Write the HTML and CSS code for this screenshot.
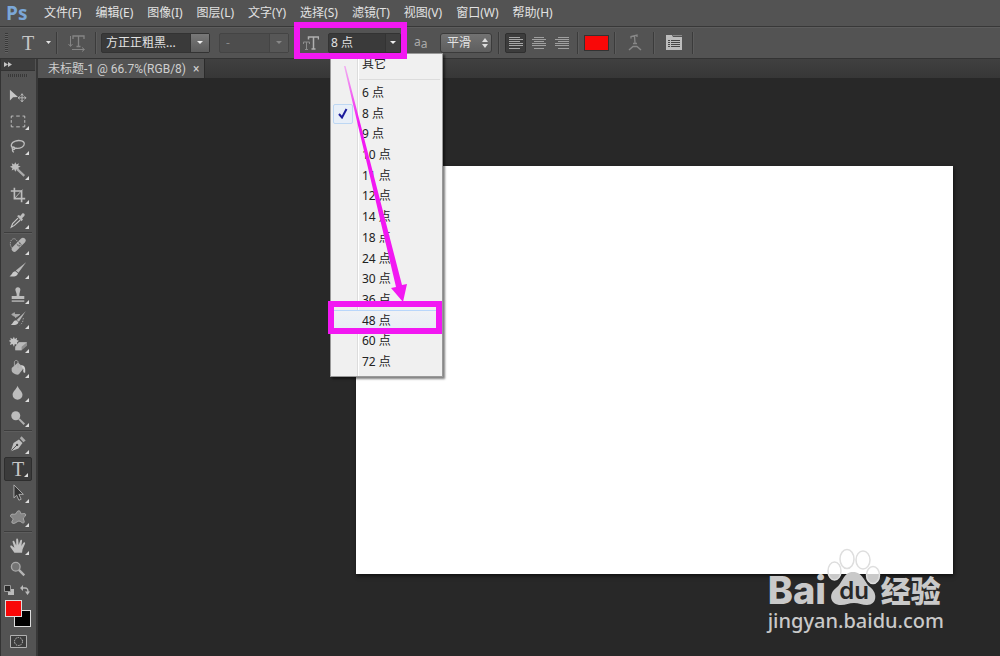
FILE: index.html
```html
<!DOCTYPE html>
<html lang="zh-CN">
<head>
  <meta charset="UTF-8">
  <meta name="viewport" content="width=device-width, initial-scale=1.0">
  <title>未标题-1</title>
  <link rel="stylesheet" href="styles.css">
</head>
<body>
  <div class="app">
    <!-- Menu bar -->
    <header class="menubar">
      <span class="logo">Ps</span>
      <nav class="menus">
        <button>文件(F)</button>
        <button>编辑(E)</button>
        <button>图像(I)</button>
        <button>图层(L)</button>
        <button>文字(Y)</button>
        <button>选择(S)</button>
        <button>滤镜(T)</button>
        <button>视图(V)</button>
        <button>窗口(W)</button>
        <button>帮助(H)</button>
      </nav>
    </header>

    <!-- Type tool options -->
    <div class="options">
      <span class="options-grip"></span>
      <button class="preset" aria-label="工具预设">
        <span class="type-letter">T</span>
        <svg width="5" height="3" viewBox="0 0 5 3"><path d="M0 0h5L2.500 3z" fill="#e4e4e4"/></svg>
      </button>
      <span class="divider"></span>
      <button class="icon-button orientation" aria-label="切换文本取向">
        <svg width="18" height="18" viewBox="0 0 18 18" fill="none" stroke="#858585">
          <path d="M5 5V2h11v3M10.500 2v10M8.500 12.500h4" stroke-width="1.300"/>
          <path d="M2.500 2v10M.5 10l2 2.500 2-2.500M4 15.500h12M14 13.500l2.500 2-2.500 2"/>
        </svg>
      </button>
      <span class="divider"></span>
      <label class="combo combo-font">
        <select aria-label="字体"><option>方正正粗黑...</option></select>
        <span class="combo-arrow"></span>
      </label>
      <label class="combo combo-style disabled">
        <select aria-label="字体样式" disabled><option>-</option></select>
        <span class="combo-arrow"></span>
      </label>
      <div class="size-control">
        <label class="size-label" for="font-size" aria-label="字体大小">
          <svg width="16" height="14" viewBox="0 0 16 14" fill="none" stroke="#b0b0b0">
            <path d="M5.500 3.500V1h10v2.500M10.500 1v11.500M8.500 13h4" stroke-width="1.500"/>
            <path d="M.5 8V6h6v2M3.500 6v7M2 13.500h3" stroke="#8d8d8d"/>
          </svg>
        </label>
        <div class="combo combo-size">
          <input id="font-size" type="text" value="8 点">
          <button class="combo-arrow" aria-label="选择大小"></button>
        </div>
        <div class="size-menu">
          <button class="size-item">其它</button>
          <div class="size-list">
            <button class="size-item">6 点</button>
            <button class="size-item checked">
              <span class="check"><svg width="10" height="11" viewBox="0 0 10 11" fill="none" stroke="#1c1c9c" stroke-width="2"><path d="M1 6l3 3.500L8.500 1"/></svg></span>8 点</button>
            <button class="size-item">9 点</button>
            <button class="size-item">10 点</button>
            <button class="size-item">11 点</button>
            <button class="size-item">12 点</button>
            <button class="size-item">14 点</button>
            <button class="size-item">18 点</button>
            <button class="size-item">24 点</button>
            <button class="size-item">30 点</button>
            <button class="size-item">36 点</button>
            <button class="size-item hover">48 点</button>
            <button class="size-item">60 点</button>
            <button class="size-item">72 点</button>
          </div>
        </div>
      </div>
      <label class="aa" for="anti-alias"><span>a</span><span class="aa-low">a</span></label>
      <div class="smooth">
        <select id="anti-alias"><option>平滑</option></select>
        <svg width="6" height="10" viewBox="0 0 6 10" fill="#dedede"><path d="M0 4l3-4 3 4zM0 6l3 4 3-4z"/></svg>
      </div>
      <span class="divider"></span>
      <div class="aligns">
        <button class="icon-button align active" aria-label="左对齐">
          <svg width="14" height="12" viewBox="0 0 14 12" stroke="#a6a6a6"><path d="M0 .5h11M0 2.500h14M0 4.500h11M0 6.500h14M0 8.500h14M0 11.500h11"/></svg>
        </button>
        <button class="icon-button align" aria-label="居中对齐">
          <svg width="14" height="12" viewBox="0 0 14 12" stroke="#a0a0a0"><path d="M2 .5h10M0 2.500h14M2 4.500h10M0 6.500h14M0 8.500h14M2 11.500h10"/></svg>
        </button>
        <button class="icon-button align" aria-label="右对齐">
          <svg width="14" height="12" viewBox="0 0 14 12" stroke="#a0a0a0"><path d="M3 .5h11M0 2.500h14M3 4.500h11M0 6.500h14M0 8.500h14M3 11.500h11"/></svg>
        </button>
      </div>
      <span class="divider"></span>
      <button class="color-swatch" aria-label="文本颜色"></button>
      <span class="divider"></span>
      <button class="icon-button warp" aria-label="变形文字">
        <svg width="14" height="17" viewBox="0 0 14 17" fill="none" stroke="#888">
          <path d="M3 4.500V2.500l6-1.500v2M6.500 2l.5 7M5 9.500h4" stroke-width="1.300"/>
          <path d="M1 16l4-3.500h4l4 3.500" stroke-width="1.500"/>
        </svg>
      </button>
      <span class="divider"></span>
      <button class="icon-button panel" aria-label="字符和段落面板">
        <svg width="16" height="15" viewBox="0 0 16 15">
          <path d="M0 0h6l1 2h9v13H0z" fill="#bdbdbd"/>
          <path d="M7 .5h9" stroke="#888"/>
          <path d="M2 5.500h2M5 5.500h9M2 7.500h2M5 7.500h9M2 9.500h2M5 9.500h9M2 11.500h2M5 11.500h9" stroke="#454545"/>
        </svg>
      </button>
      <span class="divider"></span>
    </div>

    <div class="workspace">
      <!-- Toolbox -->
      <aside class="toolbox">
        <button class="collapse" aria-label="展开面板">
          <svg width="8" height="5" viewBox="0 0 8 5" fill="#c4c4c4"><path d="M0 0l4 2.500L0 5zM4 0l4 2.500L4 5z"/></svg>
        </button>
        <div class="toolbox-grip"></div>

        <div class="tools tools-select">
          <button class="tool" aria-label="移动">
            <svg viewBox="0 0 20 20"><path d="M1 3v12l3.500-3.500L10 11z" fill="#c6c6c6"/><path d="M14.500 7.500v9M10 12h9M13 9.500l1.500-2L16 9.500M13 14.500l1.500 2 1.500-2M12 10.500L10 12l2 1.500M17 10.500l2 1.500-2 1.500" fill="none" stroke="#bbb"/></svg>
          </button>
          <button class="tool more" aria-label="矩形选框">
            <svg viewBox="0 0 20 20"><path d="M2.500 7V4.500H5M8 4.500h4M15 4.500h2.500V7M17.500 9v3M17.500 14v2.500H15M12 16.500H8M5 16.500H2.500V14M2.500 12V9" fill="none" stroke="#c8c8c8"/></svg>
          </button>
          <button class="tool more" aria-label="套索">
            <svg viewBox="0 0 20 20" fill="none" stroke="#bdbdbd" stroke-width="1.400"><path d="M5 12C1 11 2 6 7 4.500c5-1.500 10 0 10 3S13 13 8 12.500c-1-.1-2-.4-3-.5zM5 11c-2 0-2 3 0 3 2 0 2-2.500 0-3M4.500 14c-1 0-1 2 1 3"/></svg>
          </button>
          <button class="tool more" aria-label="魔棒">
            <svg viewBox="0 0 20 20"><path d="M7 1.500L8.300 4l2.700-1.500-.8 2.700 2.800 1-2.800 1.300L11.500 10l-3-.8L7 12l-1.300-2.800L3 10.500l.8-2.700L1 6.500l2.800-1.300L3 2.500 5.700 4z" fill="#bdbdbd"/><path d="M9 9l8 7.500" stroke="#ababab" stroke-width="2.400"/></svg>
          </button>
          <button class="tool more" aria-label="裁剪">
            <svg viewBox="0 0 20 20" fill="none" stroke="#bdbdbd" stroke-width="1.800"><path d="M6 2v12h12M2 5.500h12V18"/><path d="M6.500 13.500L15 4" stroke-width="1"/></svg>
          </button>
          <button class="tool more" aria-label="吸管">
            <svg viewBox="0 0 20 20"><path d="M10 8L4 14l-1.500 4L6 16l6.500-6" fill="none" stroke="#c8c8c8" stroke-width="1.300"/><path d="M9 5.500l2-1 1.500 1 2-2.500c1.500-1.500 4 .5 2.500 2.500L14.500 8l1 1.500-1.500 1.800z" fill="#bdbdbd"/></svg>
          </button>
        </div>

        <div class="tools tools-paint">
          <button class="tool more" aria-label="污点修复画笔">
            <svg viewBox="0 0 20 20"><ellipse cx="5.500" cy="8.500" rx="4" ry="5.500" fill="none" stroke="#b5b5b5" stroke-dasharray="1.500 1"/><path d="M6 14.500L15.500 5" stroke="#b5b5b5" stroke-width="6" stroke-linecap="round"/><path d="M8.500 9l4 4M10.500 6.500l4 4" stroke="#6c6c6c"/><path d="M10 10h.1M12 8h.1M12 10.500h.1" stroke="#555" stroke-width="1.300" stroke-linecap="round"/></svg>
          </button>
          <button class="tool more" aria-label="画笔">
            <svg viewBox="0 0 20 20"><path d="M19 1.500L7.500 10.500l3 2.500z" fill="#b8b8b8"/><path d="M10 13.500c-1 4.500-6.500 4-9.500 3.500 3-1 3-5.500 6.500-5.500z" fill="#c9c9c9"/></svg>
          </button>
          <button class="tool more" aria-label="仿制图章">
            <svg viewBox="0 0 20 20" fill="#bcbcbc"><path d="M8.500 9l-1.300-4a2.800 2.800 0 1 1 5.300 0L11.500 9v2H17v3.500H3V11h5.500z"/><path d="M3 16h14v1.500H3z"/></svg>
          </button>
          <button class="tool more" aria-label="历史记录画笔">
            <svg viewBox="0 0 20 20"><path d="M18.500 1.500l-10 9.500 2.500 2z" fill="#b8b8b8"/><path d="M10.500 13.500c-1 3.500-5 3.500-8.500 3 2.500-.8 2.500-5 6-5z" fill="#c9c9c9"/><path d="M3 5l3-2v4zM5 5h7L7 8.500" fill="#aaa" stroke="#aaa"/><path d="M16 9l-1 5-3 3" fill="none" stroke="#aaa" stroke-dasharray="1.500 1.500"/></svg>
          </button>
          <button class="tool more" aria-label="魔术橡皮擦">
            <svg viewBox="0 0 20 20"><path d="M5.500 2l1 2.500L9 3l-.5 2.500L11 6.500 9 8l.5 3-3-1-1 3-1.500-3-3 1L2 8-.5 6.500 2 5.500 1.500 3 4 4.500z" fill="#c4c4c4"/><path d="M11 8h9v4l-6 5H7v-4z" fill="#8d8d8d"/><path d="M11 8h9l-6 5H7zM7 13h7v4H7z" fill="#bababa"/></svg>
          </button>
          <button class="tool more" aria-label="油漆桶">
            <svg viewBox="0 0 20 20"><path d="M3 10l7-6 6.500 6-5.500 7c-3 1.500-8-2-8-4z" fill="#b5b5b5"/><path d="M10 10V3.500c0-2.500-4-2.500-4 0V8" fill="none" stroke="#a8a8a8"/><path d="M13 7c4 0 5.500 2 5 8-2 1-2.500-1-2-4z" fill="#d1d1d1"/></svg>
          </button>
          <button class="tool more" aria-label="模糊">
            <svg viewBox="0 0 20 20"><path d="M9.500 2c1 3.500 5.500 6.500 5.500 10a5.500 5.500 0 0 1-11 0C4 8.500 8.500 5.500 9.500 2z" fill="#bdbdbd"/></svg>
          </button>
          <button class="tool more" aria-label="减淡">
            <svg viewBox="0 0 20 20"><circle cx="7.500" cy="7.500" r="5" fill="#bdbdbd"/><path d="M11 11l6 6" stroke="#b0b0b0" stroke-width="2.200"/></svg>
          </button>
        </div>

        <div class="tools tools-vector">
          <button class="tool more" aria-label="钢笔">
            <svg viewBox="0 0 20 20"><path d="M2 18L5 9l6-4 4 4-4.500 6z" fill="#c0c0c0"/><path d="M12 3.500l2-2 4.500 4.500-2.500 2z" fill="#aaa"/><path d="M2.500 17.500l6-6" stroke="#484848"/><circle cx="9" cy="11" r="1.300" fill="#484848"/></svg>
          </button>
          <button class="tool more active" aria-label="横排文字"><span class="type-letter">T</span></button>
          <button class="tool more" aria-label="直接选择">
            <svg viewBox="0 0 20 20"><path d="M5.500 1v14.500l3-3 2.500 5.500 2.500-1-2.500-5.500h5z" fill="#333" stroke="#b4b4b4"/></svg>
          </button>
          <button class="tool more" aria-label="自定形状">
            <svg viewBox="0 0 20 20"><path d="M8 5c1-4 5-4 5 0 1 1 5.500-1.500 5.500 1.500 0 2.500-3 2.500-2.500 4.500.5 2 2 4 0 4.500-2 .5-3-2.500-5-2-2 0-5 4-7.500 2-1.500-1.500 1.500-3 1-4.500C4 9.500.5 9 2 6.500 3.500 4.500 6 7 8 5z" fill="#858585" stroke="#b0b0b0"/></svg>
          </button>
        </div>

        <div class="tools tools-view">
          <button class="tool more" aria-label="抓手">
            <svg viewBox="0 0 20 20"><path d="M6 17.500L1.500 11c-.5-1.500 1-2 2-1L6 12 4 5.500C3.700 4 5.500 3.500 6 5l2 4.500V3c0-1.700 2-1.700 2.200 0l.5 6L12.500 4c.5-1.500 2.200-1 2 .5L13.700 10l2.300-3.500c.8-1.300 2.400-.5 1.800 1L15 14l-.5 3.500z" fill="#c0c0c0"/></svg>
          </button>
          <button class="tool" aria-label="缩放">
            <svg viewBox="0 0 20 20"><circle cx="7.500" cy="7.500" r="4.800" fill="#747474" stroke="#a9a9a9" stroke-width="1.500"/><path d="M11 11l6 6" stroke="#b4b4b4" stroke-width="2.600"/></svg>
          </button>
        </div>

        <div class="color-actions">
          <button aria-label="默认颜色">
            <svg width="10" height="10" viewBox="0 0 10 10"><path d="M4 4h6v6H4z" fill="#bbb"/><path d="M.5 .5h6v6h-6z" fill="#2a2a2a" stroke="#999"/></svg>
          </button>
          <button aria-label="切换颜色">
            <svg width="10" height="10" viewBox="0 0 10 10"><path d="M2 3h3c2 0 3 1 3 4" fill="none" stroke="#bbb" stroke-width="1.300"/><path d="M0 3l3-3v6zM5 6.500h5L7.500 10z" fill="#bbb"/></svg>
          </button>
        </div>
        <div class="colors">
          <button class="background-color" aria-label="背景色"></button>
          <button class="foreground-color" aria-label="前景色"></button>
        </div>
        <button class="quick-mask" aria-label="快速蒙版">
          <svg width="17" height="13" viewBox="0 0 17 13" fill="none"><path d="M.5 .5h16v12H.5z" fill="#3d3d3d" stroke="#b0b0b0"/><circle cx="8.500" cy="6.500" r="4" stroke="#c4c4c4" stroke-dasharray="1.500 1"/></svg>
        </button>
      </aside>

      <!-- Document -->
      <main class="document">
        <div class="tabs">
          <div class="tab">
            <span>未标题-1 @ 66.7%(RGB/8)</span>
            <button class="tab-close" aria-label="关闭">×</button>
          </div>
        </div>
        <div class="stage">
          <div class="canvas"></div>
        </div>
      </main>

      <div class="watermark">
        <div class="watermark-brand">
          <span class="brand-latin">Bai</span>
          <svg class="paw" width="54" height="58" viewBox="0 0 54 58">
            <defs>
              <linearGradient id="toe" gradientUnits="userSpaceOnUse" x1="0" y1="0" x2="0" y2="58">
                <stop offset="0.450" stop-color="#fff"/>
                <stop offset="0.450" stop-color="#c9c9c9"/>
              </linearGradient>
            </defs>
            <g fill="url(#toe)" stroke="#dedede" stroke-width="1.500">
              <ellipse cx="20" cy="11" rx="7" ry="9.500"/>
              <ellipse cx="36" cy="12" rx="7" ry="9"/>
              <ellipse cx="7.500" cy="23" rx="6.500" ry="9"/>
              <ellipse cx="46" cy="27" rx="6.500" ry="8.500"/>
            </g>
            <path d="M26 24c10 0 11 10 17 15 8 6 7 18-3 18-5 0-8-2-13-2s-8 2-13 2C3 57 1 46 9 40c7-5 7-16 17-16z" fill="#c9c9c9"/>
            <text x="27" y="51" text-anchor="middle" class="paw-text">du</text>
          </svg>
          <span class="brand-cjk">经验</span>
        </div>
        <div class="watermark-url">jingyan.baidu.com</div>
      </div>
    </div>

    <!-- Highlight boxes and arrow -->
    <svg class="annotation" width="450" height="340" viewBox="0 0 450 340">
      <defs>
        <linearGradient id="fade" x1="0" y1="0" x2="0" y2="1">
          <stop offset="0" stop-color="#f218f2" stop-opacity="0.300"/>
          <stop offset="0.250" stop-color="#f218f2"/>
        </linearGradient>
      </defs>
      <rect x="297" y="25" width="107" height="31" fill="none" stroke="#f218f2" stroke-width="6"/>
      <rect x="331" y="304" width="108" height="27" fill="none" stroke="#f218f2" stroke-width="6"/>
      <path d="M344 66l1.500 0L402 285l5-1-4 18-12-14 5-1z" fill="url(#fade)"/>
    </svg>
  </div>
</body>
</html>
```
FILE: styles.css
```css
* {
  box-sizing: border-box;
}

body {
  margin: 0;
  background: #282828;
  color: #e2e2e2;
  font-family: "Noto Sans", "Noto Sans CJK SC", sans-serif;
  font-size: 12px;
  line-height: 16px;
}

button,
select,
input {
  margin: 0;
  padding: 0;
  border: 0;
  background: none;
  color: inherit;
  font: inherit;
}

select {
  appearance: none;
}

svg {
  display: block;
}

.app {
  position: relative;
  display: flex;
  flex-direction: column;
  min-height: 100vh;
}

/* Menu bar */
.menubar {
  display: flex;
  align-items: center;
  height: 26px;
  padding-left: 6px;
  background: #535353;
}

.logo {
  width: 38px;
  color: #7ba7d7;
  font-family: "Open Sans", sans-serif;
  font-size: 19px;
  font-weight: bold;
}

.menus {
  display: flex;
  gap: 14px;
}

.menus button {
  white-space: nowrap;
}

/* Options bar */
.options {
  display: flex;
  align-items: center;
  height: 33px;
  padding-left: 5px;
  border-top: 1px solid #383838;
  border-bottom: 1px solid #333;
  background: #535353;
  box-shadow: inset 0 1px #5d5d5d;
}

.options-grip {
  width: 3px;
  height: 20px;
  background: repeating-linear-gradient(#383838 0 1px, #626262 1px 2px);
}

.divider {
  flex: none;
  width: 2px;
  height: 22px;
  border-left: 1px solid #3b3b3b;
  border-right: 1px solid #5c5c5c;
}

.preset {
  display: flex;
  align-items: center;
  justify-content: space-between;
  width: 48px;
  padding: 0 5px 0 14px;
}

.type-letter {
  color: #c6c6c6;
  font-family: "Liberation Serif", serif;
  font-size: 20px;
  line-height: 20px;
}

.icon-button {
  display: flex;
  align-items: center;
  justify-content: center;
  height: 20px;
}

.orientation {
  width: 37px;
}

.combo {
  display: flex;
  height: 20px;
  border: 1px solid #333;
  border-radius: 2px;
  background: #3a3a3a;
}

.combo select,
.combo input {
  flex: 1;
  min-width: 0;
  padding-left: 4px;
}

.combo-arrow {
  display: flex;
  align-items: center;
  justify-content: center;
  width: 19px;
  border-left: 1px solid #333;
  background: linear-gradient(#787878, #5c5c5c);
}

.combo-arrow::after {
  content: "";
  border: 3px solid transparent;
  border-top-color: #eee;
  border-bottom: 0;
}

.combo-font {
  width: 109px;
  margin-left: 4px;
}

.combo-style {
  width: 70px;
  margin-left: 9px;
}

.combo.disabled {
  border-color: #444;
  background: #4d4d4d;
  color: #888;
}

.disabled select {
  opacity: 1;
  padding-left: 6px;
}

.disabled .combo-arrow {
  border-color: #444;
  background: #575757;
}

.disabled .combo-arrow::after {
  border-top-color: #888;
}

.size-control {
  position: relative;
  display: flex;
  align-items: center;
  margin-left: 14px;
}

.size-label {
  width: 25px;
}

.combo-size {
  width: 73px;
}

.combo-size input {
  padding-left: 2px;
}

.combo-size .combo-arrow {
  width: 15px;
  background: #404040;
}

/* Size drop-down */
.size-menu {
  position: absolute;
  top: 20px;
  left: 27px;
  z-index: 2;
  width: 113px;
  padding: 2px;
  border: 1px solid #999;
  background: linear-gradient(90deg, #f0f0f0 26px, #dcdcdc 26px 27px, #fff 27px 28px, #f0f0f0 28px);
  box-shadow: 2px 2px 2px rgba(0, 0, 0, 0.5);
  color: #222;
}

.size-item {
  position: relative;
  display: flex;
  align-items: center;
  width: 100%;
  padding-left: 29px;
}

.size-list {
  display: grid;
  grid-auto-rows: 1fr;
  height: 295px;
  margin-top: 7px;
  padding: 4px 0 1px;
  background: linear-gradient(#dcdcdc, #dcdcdc) 26px 0 / 100% 1px no-repeat;
}

.size-item.hover {
  border-top: 1px solid #b8d6fb;
  border-bottom: 1px solid #b8d6fb;
  background: linear-gradient(#f0f2f5, #e6edf6);
}

.check {
  position: absolute;
  left: 0;
  display: flex;
  align-items: center;
  justify-content: center;
  width: 20px;
  height: 20px;
  border: 1px solid #bdd7f3;
  border-radius: 2px;
  background: #e8eff8;
}

.aa {
  display: flex;
  width: 39px;
  padding-left: 13px;
  color: #aaa;
}

.aa-low {
  padding-top: 2px;
}

.smooth {
  position: relative;
  display: flex;
  align-items: center;
  width: 52px;
  height: 20px;
  margin-right: 6px;
  border: 1px solid #3b3b3b;
  border-radius: 3px;
  background: linear-gradient(#727272, #5e5e5e);
}

.smooth select {
  width: 100%;
  padding-left: 6px;
}

.smooth svg {
  position: absolute;
  right: 3px;
  pointer-events: none;
}

.aligns {
  display: flex;
  gap: 2px;
  padding: 0 5px;
}

.align {
  width: 21px;
}

.align.active {
  border: 1px solid #2f2f2f;
  border-radius: 2px;
  background: #3c3c3c;
}

.color-swatch {
  width: 25px;
  height: 16px;
  margin: 0 5px;
  border: 1px solid #333;
  background: #f90808;
}

.warp {
  width: 37px;
}

.panel {
  width: 37px;
}

/* Workspace */
.workspace {
  position: relative;
  display: flex;
  flex: 1;
}

.toolbox {
  display: flex;
  flex-direction: column;
  flex: none;
  width: 38px;
  padding-right: 1px;
  border-left: 1px solid #333;
  border-right: 2px solid #383838;
  background: #535353;
}

.collapse {
  height: 12px;
  padding-left: 3px;
  border-bottom: 1px solid #333;
  background: #3d3d3d;
}

.toolbox-grip {
  height: 3px;
  margin: 3px 7px 7px;
  background: repeating-linear-gradient(90deg, #383838 0 1px, #555 1px 2px);
}

.tools {
  display: grid;
  grid-auto-rows: 1fr;
  margin: 0 3px;
}

.tools + .tools {
  border-top: 1px solid #3d3d3d;
  box-shadow: inset 0 1px #5d5d5d;
}

.tools-select {
  height: 148px;
}

.tools-paint {
  height: 198px;
}

.tools-vector {
  height: 101px;
  padding: 1px 0;
}

.tools-view {
  height: 52px;
  padding: 2px 0;
}

.tool {
  position: relative;
  display: flex;
  align-items: center;
  justify-content: center;
}

.tool svg {
  width: 18px;
  height: 18px;
}

.tool.active {
  border: 1px solid #2e2e2e;
  border-radius: 2px;
  background: #3b3b3b;
}

.tool.more::after {
  content: "";
  position: absolute;
  right: 3px;
  bottom: 3px;
  border: 2px solid #ddd;
  border-top-color: transparent;
  border-left-color: transparent;
}

.color-actions {
  display: flex;
  justify-content: space-between;
  padding: 2px 5px 0 3px;
}

.colors {
  position: relative;
  height: 27px;
  margin-top: 5px;
}

.foreground-color,
.background-color {
  position: absolute;
  width: 17px;
  height: 17px;
  border: 1px solid #ddd;
}

.foreground-color {
  top: 0;
  left: 4px;
  background: #f90808;
}

.background-color {
  bottom: 0;
  right: 4px;
  background: #000;
}

.quick-mask {
  align-self: center;
  margin-top: 8px;
}

/* Document area */
.document {
  display: flex;
  flex: 1;
  flex-direction: column;
  min-width: 0;
}

.tabs {
  display: flex;
  height: 19px;
  background: linear-gradient(#404040, #373737);
}

.tab {
  display: flex;
  align-items: center;
  gap: 7px;
  padding: 0 5px 0 10px;
  border-right: 1px solid #2b2b2b;
  background: #535353;
  color: #cfcfcf;
  font-family: Roboto, "Noto Sans CJK SC", sans-serif;
  white-space: nowrap;
}

.stage {
  display: flex;
  flex: 1;
  padding: 88px 47px 82px 318px;
  background: #282828;
}

.canvas {
  flex: 1;
  background: #fff;
  box-shadow: 1px 2px 4px rgba(0, 0, 0, 0.6);
}

.watermark {
  position: absolute;
  right: 56px;
  bottom: 20px;
  color: #c9c9c9;
}

.watermark-brand {
  display: flex;
  align-items: flex-end;
}

.brand-latin {
  width: 59px;
  font-family: Inter, sans-serif;
  font-size: 38px;
  font-weight: 800;
  line-height: 32px;
}

.brand-cjk {
  font-family: "Noto Sans CJK SC", sans-serif;
  font-size: 30px;
  font-weight: 900;
  line-height: 34px;
}

.paw-text {
  fill: #282828;
  font-family: Inter, sans-serif;
  font-size: 24px;
  font-weight: 600;
}

.watermark-url {
  font-family: "Noto Sans", sans-serif;
  font-size: 20px;
  font-weight: 500;
  line-height: 30px;
}

.annotation {
  position: absolute;
  top: 0;
  left: 0;
  z-index: 3;
  pointer-events: none;
}
```
